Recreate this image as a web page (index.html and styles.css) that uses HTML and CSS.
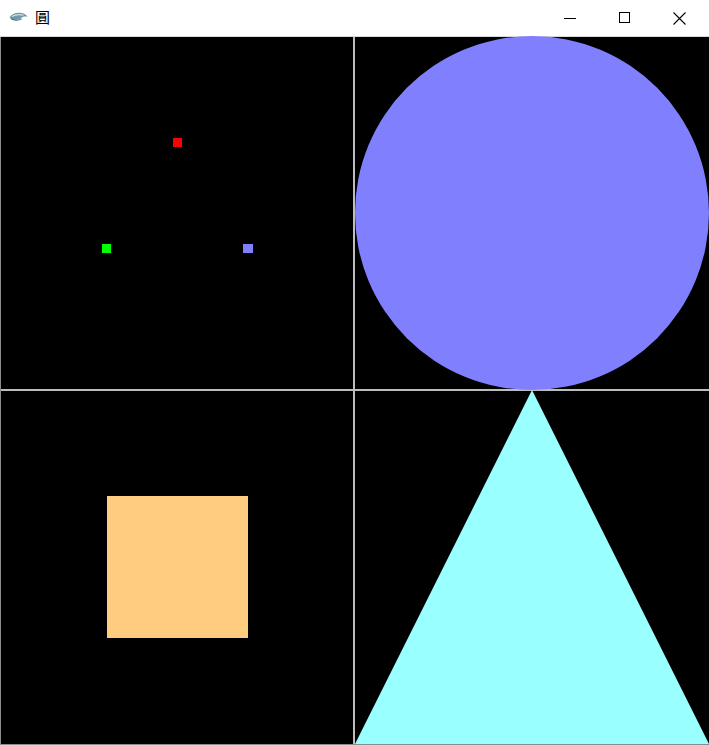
FILE: index.html
```html
<!DOCTYPE html>
<html>
<head>
<meta charset="utf-8">
<title>圓</title>
<link rel="stylesheet" href="styles.css">
</head>
<body>
<div class="window">
  <div class="titlebar">
    <svg class="app-icon" width="19" height="12" viewBox="0 0 19 12">
      <path d="M0.5 6.5 C2.5 2.5 8 1 12.5 2 C15.5 2.6 17.8 4 18.5 5.8 C16.5 5.2 14 5.6 12 7 C8.5 9.5 3.5 9.5 0.5 6.5 Z" fill="#6f98a8"/>
      <path d="M3 5.5 C6 3.5 10.5 3.2 14.5 4.2" stroke="#cfe0e6" stroke-width="1.3" fill="none"/>
      <path d="M2 7.5 C5 9.8 9.5 9.6 12.5 7.8" stroke="#3f6a7a" stroke-width="1.2" fill="none"/>
    </svg>
    <span class="title">圓</span>
    <div class="controls">
      <div class="btn"><svg width="12" height="12" viewBox="0 0 12 12"><line x1="0" y1="6.5" x2="12" y2="6.5" stroke="#000" stroke-width="1"/></svg></div>
      <div class="btn"><svg width="12" height="12" viewBox="0 0 12 12"><rect x="0.5" y="0.5" width="10" height="10" fill="none" stroke="#000" stroke-width="1"/></svg></div>
      <div class="btn"><svg width="13" height="13" viewBox="0 0 13 13"><path d="M0.5 0.5 L12.5 12.5 M12.5 0.5 L0.5 12.5" stroke="#000" stroke-width="1.1"/></svg></div>
    </div>
  </div>
  <div class="client">
    <div class="quad">
      <svg class="canvas" viewBox="0 0 352 352">
        <rect x="172" y="101" width="9" height="9" fill="#ff0000"/>
        <rect x="101" y="207" width="9" height="9" fill="#00ff00"/>
        <rect x="242" y="207" width="10" height="9" fill="#8080ff"/>
      </svg>
    </div>
    <div class="quad">
      <svg class="canvas" viewBox="0 0 354 352">
        <circle cx="177" cy="176" r="177" fill="#8080ff"/>
      </svg>
    </div>
    <div class="quad">
      <svg class="canvas" viewBox="0 0 352 353">
        <rect x="106" y="105" width="141" height="142" fill="#ffcc80"/>
      </svg>
    </div>
    <div class="quad">
      <svg class="canvas" viewBox="0 0 354 353">
        <polygon points="177,-1 354,353 0,353" fill="#99ffff"/>
      </svg>
    </div>
  </div>
</div>
</body>
</html>
```

FILE: styles.css
```css
html, body {
  margin: 0;
  padding: 0;
  background: #ffffff;
}
.window {
  width: 709px;
  height: 745px;
  display: flex;
  flex-direction: column;
  overflow: hidden;
}
.titlebar {
  height: 36px;
  flex: none;
  display: flex;
  align-items: center;
  background: #ffffff;
  border-bottom: 1px solid #d9d9d9;
  font-family: "Noto Sans CJK TC", "Noto Sans", sans-serif;
}
.app-icon {
  margin-left: 9px;
  margin-top: -3px;
  flex: none;
}
.title {
  margin-left: 7px;
  font-size: 15px;
  color: #000;
  line-height: 1;
  margin-top: -3px;
}
.controls {
  margin-left: auto;
  margin-right: 2px;
  display: flex;
  height: 100%;
}
.btn {
  width: 55px;
  height: 100%;
  display: flex;
  align-items: center;
  justify-content: center;
}
.btn svg {
  display: block;
}
.client {
  flex: 1;
  display: grid;
  grid-template-columns: 352px 354px;
  grid-template-rows: 352px 353px;
  column-gap: 2px;
  row-gap: 2px;
  background: #bdbdbd;
  border-left: 1px solid #8c8c8c;
  border-bottom: 1px solid #8c8c8c;
}
.quad {
  background: #000000;
  overflow: visible;
  position: relative;
}
.canvas {
  display: block;
  width: 100%;
  height: 100%;
  overflow: visible;
}
```
